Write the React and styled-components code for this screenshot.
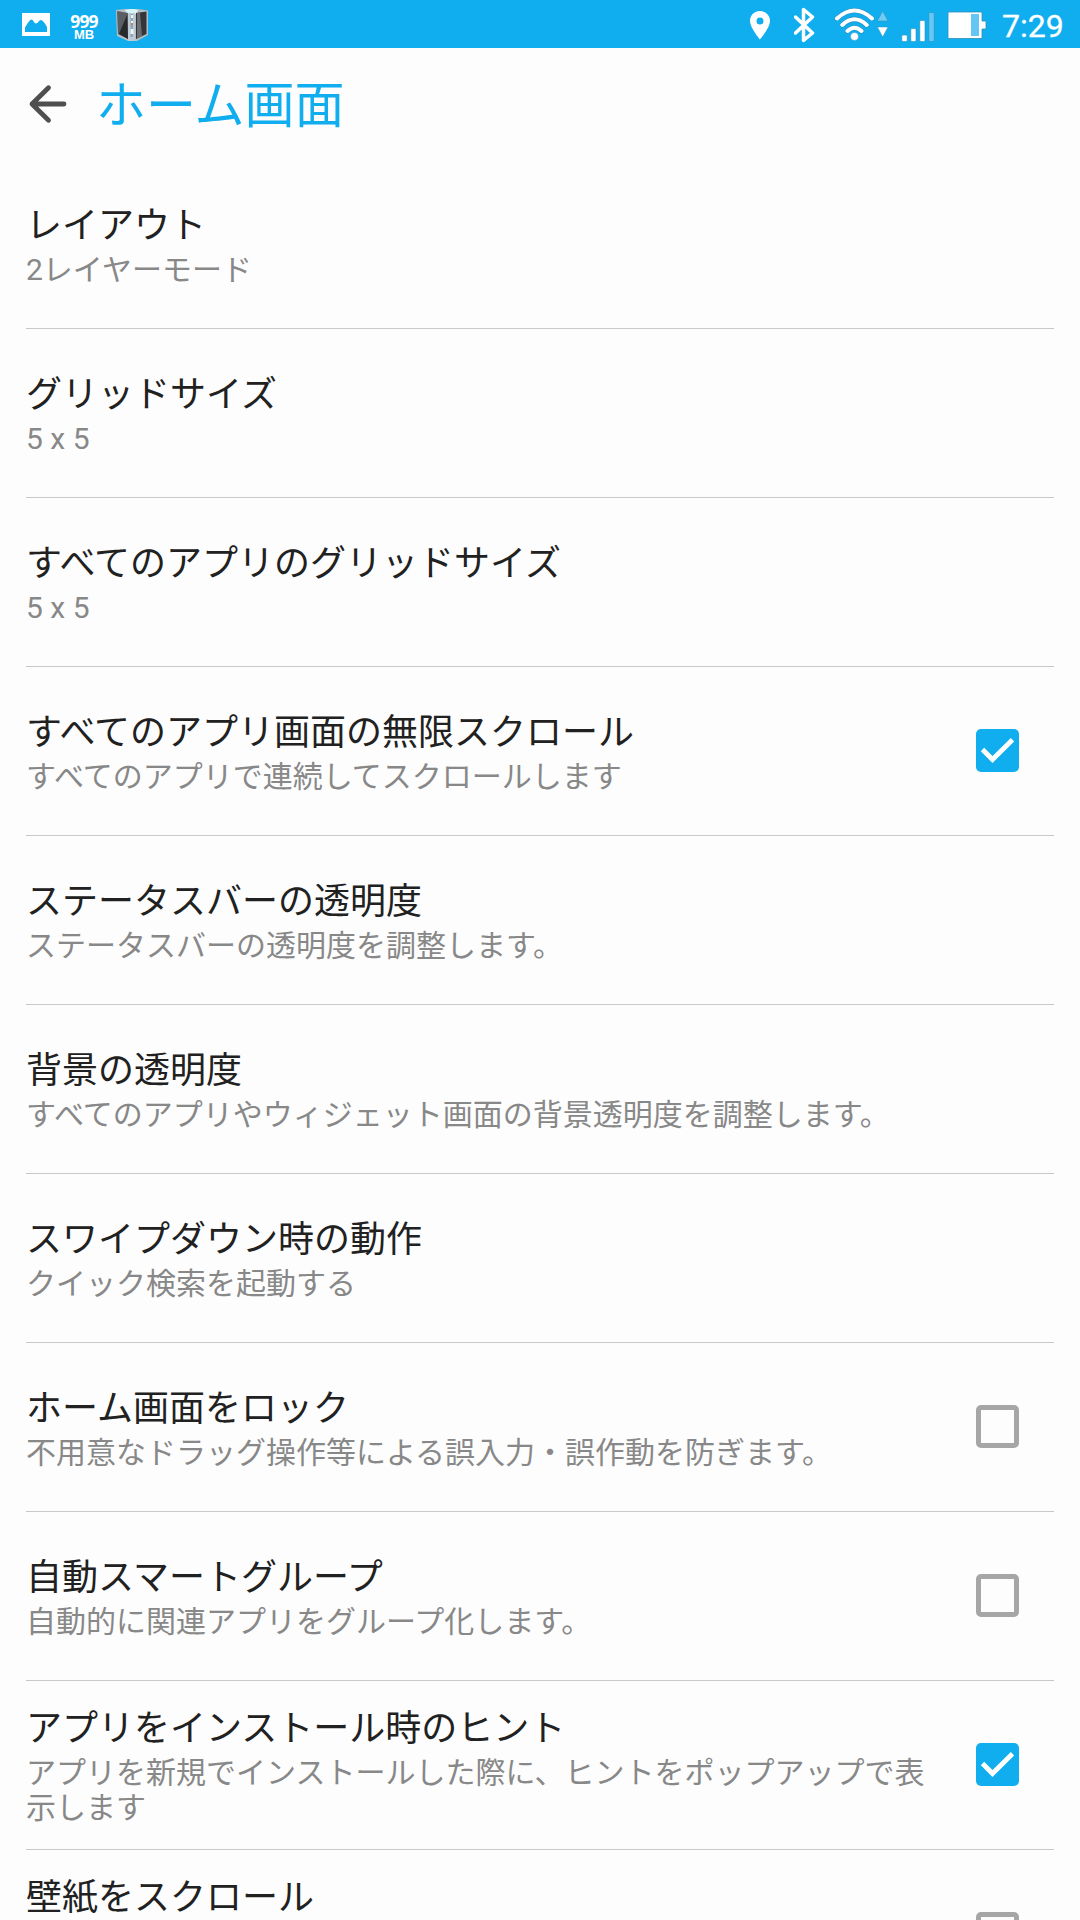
import React from "react";
import styled, { createGlobalStyle } from "styled-components";

const BLUE = "#10aeef";

const GlobalStyle = createGlobalStyle`
  *, *::before, *::after { box-sizing: border-box; }
  body { margin: 0; background: #fdfdfd; }
`;

const Screen = styled.div`
  width: 1080px;
  height: 1920px;
  overflow: hidden;
  display: flex;
  flex-direction: column;
  background: #fdfdfd;
  font-family: Roboto, "Noto Sans CJK JP", sans-serif;
`;

const StatusBar = styled.div`
  flex: none;
  height: 48px;
  display: flex;
  justify-content: space-between;
  background: ${BLUE};
  color: #fff;
`;

const StatusGroup = styled.div`
  display: flex;
  align-items: center;
  padding: ${(p) => p.$pad};
`;

const StatusIcon = styled.svg`
  display: block;
  flex: none;
  width: ${(p) => p.$w}px;
  height: 48px;
  margin-right: ${(p) => p.$gap || 0}px;
`;

const MemoryBadge = styled.div`
  width: 28px;
  margin-right: 18px;
  display: flex;
  flex-direction: column;
  align-items: center;
  padding-top: 5px;
`;

const MemoryValue = styled.span`
  font-family: "Noto Sans", sans-serif;
  font-weight: 700;
  font-size: 17.5px;
  line-height: 15px;
  letter-spacing: -0.8px;
`;

const MemoryUnit = styled.span`
  font-family: "Liberation Sans", sans-serif;
  font-weight: 700;
  font-size: 13px;
  line-height: 11px;
`;

const Clock = styled.span`
  flex: none;
  width: 63px;
  font-size: 32px;
  line-height: 48px;
  font-weight: 400;
  -webkit-text-stroke: 0.3px #fff;
  padding: 3px 0 0 1px;
`;

const AppBar = styled.header`
  flex: none;
  height: 112px;
  display: flex;
  align-items: center;
  padding: 0 28px;
`;

const BackButton = styled.button`
  flex: none;
  width: 40px;
  height: 40px;
  margin-right: 28px;
  padding: 0;
  border: 0;
  background: none;
`;

const Heading = styled.h1`
  margin: 0;
  padding-top: 3px;
  color: ${BLUE};
  font-size: 50px;
  line-height: 60px;
  font-weight: 400;
`;

const List = styled.main`
  padding: 0 26px;
`;

const Row = styled.section`
  height: 169px;
  display: flex;
  align-items: center;
  justify-content: space-between;
  padding-right: 35px;
  border-bottom: 1px solid #c9c9c9;
`;

const RowText = styled.div`
  width: 904px;
  padding-top: 3px;
`;

const Title = styled.div`
  color: #212121;
  font-size: 36px;
  line-height: 44px;
`;

const Summary = styled.div`
  min-height: ${(p) => (p.$lines === 2 ? 72 : 35)}px;
  margin-top: 4px;
  color: #888;
  font-size: 30px;
  line-height: 35px;
`;

const Box = styled.span`
  flex: none;
  width: 43px;
  height: 43px;
  margin-bottom: 1px;
  border-radius: 5px;
  border: ${(p) => (p.$on ? "0" : "5px solid #a6a6a6")};
  background: ${(p) => (p.$on ? BLUE : "transparent")};
`;

function Checkbox({ checked }) {
  return (
    <Box $on={checked} role="checkbox" aria-checked={checked}>
      {checked && (
        <svg width="43" height="43" viewBox="0 0 43 43" style={{ display: "block" }}>
          <path d="M6.500 20.500 16.500 30.500 36.500 10.800" fill="none" stroke="#fff" strokeWidth="4.800" />
        </svg>
      )}
    </Box>
  );
}

const settings = [
  { title: "レイアウト", summary: "2レイヤーモード" },
  { title: "グリッドサイズ", summary: "5 x 5" },
  { title: "すべてのアプリのグリッドサイズ", summary: "5 x 5" },
  { title: "すべてのアプリ画面の無限スクロール", summary: "すべてのアプリで連続してスクロールします", checked: true },
  { title: "ステータスバーの透明度", summary: "ステータスバーの透明度を調整します。" },
  { title: "背景の透明度", summary: "すべてのアプリやウィジェット画面の背景透明度を調整します。" },
  { title: "スワイプダウン時の動作", summary: "クイック検索を起動する" },
  { title: "ホーム画面をロック", summary: "不用意なドラッグ操作等による誤入力・誤作動を防ぎます。", checked: false },
  { title: "自動スマートグループ", summary: "自動的に関連アプリをグループ化します。", checked: false },
  { title: "アプリをインストール時のヒント", summary: "アプリを新規でインストールした際に、ヒントをポップアップで表示します", checked: true, lines: 2 },
  { title: "壁紙をスクロール", checked: false, lines: 2 },
];

function PictureIcon() {
  return (
    <StatusIcon $w={28} $gap={20} viewBox="22 0 28 48">
      <path fillRule="evenodd" fill="#fff" d="M22 13h28v23H22zM25 32h22v-5Q43 20 41 20C39 20 38 23.500 36 23.500S33.500 19.500 31.500 19.500Q29.500 19.500 25 27.500z" />
    </StatusIcon>
  );
}

function TowerIcon() {
  return (
    <StatusIcon $w={32} viewBox="116 0 32 48">
      <path d="M116 10 125 9h13l10 1.500v24.500l-11 6h-9l-11-5z" fill="#b5bfc3" />
      <path d="M125 10q7-2 13 0l-2 4h-8z" fill="#d8f5fc" />
      <path d="M117 11 128 13v26l-10-5z" fill="#5b5e63" />
      <path d="M127 15l1 24-9-5z" fill="#27292c" />
      <path d="M136 13l10.500-1.500V34L136 39z" fill="#33353a" />
      <path d="M137 13l3-.5 2 24-5 2z" fill="#6b6e73" />
      <path d="M128 13h7v28h-7z" fill="#bccbd5" />
      <path d="M130.500 14h2.500v23h-2.500z" fill="#91a6b3" />
      <path d="M131 15h2v3h-2zM131 21h2v2h-2zM130.500 29h3v5h-3z" fill="#e9f5fa" />
      <path d="M131 23h2v2h-2z" fill="#b98262" />
    </StatusIcon>
  );
}

function PinIcon() {
  return (
    <StatusIcon $w={20} $gap={24} viewBox="750 0 20 48">
      <path fillRule="evenodd" fill="#fff" d="M760 11c-5.600 0-10 4.300-10 9.800C750 28 760 39.500 760 39.500S770 28 770 20.800c0-5.500-4.400-9.800-10-9.800zm0 6.400a3.500 3.500 0 1 1 0 7 3.500 3.500 0 0 1 0-7z" />
    </StatusIcon>
  );
}

function BluetoothIcon() {
  return (
    <StatusIcon $w={22} $gap={18} viewBox="794 0 22 48">
      <path d="M795.500 17 812.500 33 803.500 40.500V9.500L812.500 17 795.500 33" fill="none" stroke="#fff" strokeWidth="3.500" strokeLinejoin="round" strokeLinecap="round" />
    </StatusIcon>
  );
}

function WifiIcon() {
  const arcs = "M837 18.500Q854.500 2.500 872 18.500M842.300 25Q854.500 13.500 866.700 25M847.500 31Q854.500 24.500 861.500 31";
  return (
    <StatusIcon $w={55} $gap={12} viewBox="834 0 55 48">
      <g fill="none" strokeLinecap="round">
        <path d={arcs} stroke="#2b8fb9" strokeWidth="5" />
        <path d={arcs} stroke="#fff" strokeWidth="4" />
      </g>
      <circle cx="854.500" cy="36.500" r="4" fill="#fff" stroke="#2b8fb9" strokeWidth=".5" />
      <path d="M882.700 11 888 21h-10.600z" fill="#6fcdf5" stroke="#3293bc" strokeWidth=".6" />
      <path d="M877.400 27H888L882.700 37z" fill="#fff" stroke="#2b8fb9" strokeWidth=".5" />
    </StatusIcon>
  );
}

function SignalIcon() {
  return (
    <StatusIcon $w={35} $gap={11} viewBox="901 0 35 48">
      <g fill="#fff" stroke="#2b8fb9" strokeWidth=".6">
        <rect x="901.800" y="35" width="5.400" height="6.500" rx="1.200" />
        <rect x="910.800" y="28.500" width="5.200" height="13" rx="1.200" />
        <rect x="919.800" y="20.500" width="5.200" height="21" rx="1.200" />
        <rect x="928.800" y="12.500" width="5.400" height="29" rx="1.200" fill="#64c8f4" />
      </g>
    </StatusIcon>
  );
}

function BatteryIcon() {
  return (
    <StatusIcon $w={40} $gap={14} viewBox="947 0 40 48">
      <path d="M948 12h34v9h4v8h-4v9.500h-34z" fill="#fff" stroke="#2b8fb9" strokeWidth=".8" />
      <rect x="971" y="14" width="8" height="22" fill="#64c6f3" />
    </StatusIcon>
  );
}

export default function App() {
  return (
    <Screen lang="ja">
      <GlobalStyle />
      <StatusBar>
        <StatusGroup $pad="0 0 0 22px">
          <PictureIcon />
          <MemoryBadge>
            <MemoryValue>999</MemoryValue>
            <MemoryUnit>MB</MemoryUnit>
          </MemoryBadge>
          <TowerIcon />
        </StatusGroup>
        <StatusGroup $pad="0 16px 0 0">
          <PinIcon />
          <BluetoothIcon />
          <WifiIcon />
          <SignalIcon />
          <BatteryIcon />
          <Clock>7:29</Clock>
        </StatusGroup>
      </StatusBar>
      <AppBar>
        <BackButton aria-label="戻る">
          <svg width="40" height="40" viewBox="0 0 40 40" style={{ display: "block" }}>
            <path d="M36 20H4M20.500 3.800 4 20l16.500 16.200" fill="none" stroke="#4f4f4f" strokeWidth="4.800" strokeLinecap="round" strokeLinejoin="round" />
          </svg>
        </BackButton>
        <Heading>ホーム画面</Heading>
      </AppBar>
      <List>
        {settings.map((item) => (
          <Row key={item.title}>
            <RowText>
              <Title>{item.title}</Title>
              <Summary $lines={item.lines}>{item.summary}</Summary>
            </RowText>
            {item.checked !== undefined && <Checkbox checked={item.checked} />}
          </Row>
        ))}
      </List>
    </Screen>
  );
}
